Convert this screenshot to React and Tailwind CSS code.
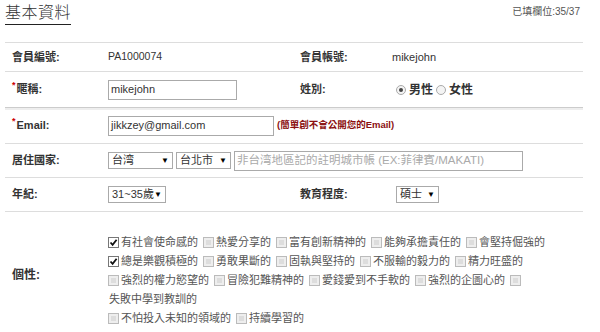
import React from "react";

const Check = ({ on }) => (
  <span className={`inline-flex w-[11px] h-[11px] shrink-0 items-center justify-center border ${on ? "border-[#777] bg-white" : "border-[#bbb] bg-[#eee]"}`}>
    {on ? (
      <svg width="9" height="9" viewBox="0 0 9 9">
        <path d="M1.5 4.5 L3.6 6.8 L7.6 1.8" fill="none" stroke="#111" strokeWidth="1.8" />
      </svg>
    ) : (
      <span className="w-[5px] h-[5px] bg-[#ddd]" />
    )}
  </span>
);

const Item = ({ on, label }) => (
  <span className="inline-flex items-center gap-[2px] mr-[5px] whitespace-nowrap">
    <Check on={on} />
    {label ? <span>{label}</span> : null}
  </span>
);

const Select = ({ w, text }) => (
  <span className={`inline-flex h-[17px] items-center justify-between whitespace-nowrap border border-[#aaa] bg-white px-[3px] text-[11px] text-[#333] ${w}`}>
    <span>{text}</span>
    <span className="text-[8px] text-black">▼</span>
  </span>
);

const Radio = ({ on }) => (
  <span className="inline-flex w-[10px] h-[10px] items-center justify-center rounded-full border border-[#aaa] bg-[#f4f4f4]">
    {on ? <span className="w-[4px] h-[4px] rounded-full bg-[#444]" /> : null}
  </span>
);

const Label = ({ children, req }) => (
  <div className="w-[103px] shrink-0 pl-[7px] font-bold text-[#333] flex items-center">
    {req ? <span className="text-[#c00] text-[9px] self-start mt-[-2px] mr-[1px]">*</span> : null}
    {children}
  </div>
);

export default function App() {
  return (
    <div className="w-[600px] h-[332px] overflow-hidden bg-white text-[11px] text-[#333] font-['Liberation_Sans','Noto_Sans_CJK_TC',sans-serif]">
      <div className="flex items-start justify-between h-[42px] pl-[5px] pr-[20px]">
        <div className="mt-[3px] border-b border-[#222] pb-[1px] text-[16px] font-light leading-[20px] tracking-[0.5px] text-[#333]">基本資料</div>
        <div className="mt-[4px] text-[10px] text-[#555]">已填欄位:35/37</div>
      </div>
      <div className="ml-[5px] w-[578px] border-t border-[#ddd]">
        <div className="flex h-[29px] items-center border-b border-[#ddd]">
          <div className="flex w-[295px] items-center">
            <Label>會員編號:</Label>
            <span className="text-[10.5px]">PA1000074</span>
          </div>
          <div className="flex items-center">
            <div className="w-[92px] font-bold">會員帳號:</div>
            <span>mikejohn</span>
          </div>
        </div>
        <div className="flex h-[36px] items-center border-b border-[#ccc] shadow-[0_2px_0_#eee]">
          <div className="flex w-[295px] items-center">
            <Label req>暱稱:</Label>
            <span className="flex h-[20px] w-[129px] items-center border border-[#aaa] px-[2px] text-[11px]">mikejohn</span>
          </div>
          <div className="flex items-center">
            <div className="w-[92px] font-bold">姓別:</div>
            <span className="ml-[4px] flex items-center gap-[3px] text-[12px] font-bold">
              <Radio on />
              <span>男性</span>
              <Radio />
              <span>女性</span>
            </span>
          </div>
        </div>
        <div className="flex h-[36px] items-center border-b border-[#ddd]">
          <Label req>Email:</Label>
          <span className="flex h-[20px] w-[166px] items-center border border-[#aaa] px-[2px] text-[11px]">jikkzey@gmail.com</span>
          <span className="ml-[3px] text-[9.5px] font-bold text-[#8b1010]">(簡單創不會公開您的Email)</span>
        </div>
        <div className="flex h-[34px] items-center border-b border-[#ddd]">
          <Label>居住國家:</Label>
          <Select w="w-[65px]" text="台湾" />
          <span className="w-[3px]" />
          <Select w="w-[55px]" text="台北市" />
          <span className="w-[3px]" />
          <span className="flex h-[20px] w-[289px] items-center border border-[#aaa] px-[2px] text-[11.5px] text-[#aaa]">非台湾地區記的註明城市帳 (EX:菲律賓/MAKATI)</span>
        </div>
        <div className="flex h-[34px] items-center border-b border-[#ddd]">
          <div className="flex w-[295px] items-center">
            <Label>年紀:</Label>
            <Select w="w-[58px]" text="31~35歲" />
          </div>
          <div className="flex items-center">
            <div className="w-[92px] font-bold">教育程度:</div>
            <span className="ml-[4px] flex"><Select w="w-[43px]" text="碩士" /></span>
          </div>
        </div>
        <div className="flex pt-[21px]">
          <div className="w-[103px] shrink-0 pl-[7px] pt-[33px] font-bold text-[12px]">個性:</div>
          <div className="flex flex-col text-[11px] text-[#555] leading-[19px]">
            <div className="flex items-center">
              <Item on label="有社會使命感的" />
              <Item label="熱愛分享的" />
              <Item label="富有創新精神的" />
              <Item label="能夠承擔責任的" />
              <Item label="會堅持倔強的" />
            </div>
            <div className="flex items-center">
              <Item on label="總是樂觀積極的" />
              <Item label="勇敢果斷的" />
              <Item label="固執與堅持的" />
              <Item label="不服輸的毅力的" />
              <Item label="精力旺盛的" />
            </div>
            <div className="flex items-center">
              <Item label="強烈的權力慾望的" />
              <Item label="冒險犯難精神的" />
              <Item label="愛錢愛到不手軟的" />
              <Item label="強烈的企圖心的" />
              <Item />
            </div>
            <div className="flex items-center pl-[1px]">失敗中學到教訓的</div>
            <div className="flex items-center">
              <Item label="不怕投入未知的領域的" />
              <Item label="持續學習的" />
            </div>
          </div>
        </div>
      </div>
    </div>
  );
}
